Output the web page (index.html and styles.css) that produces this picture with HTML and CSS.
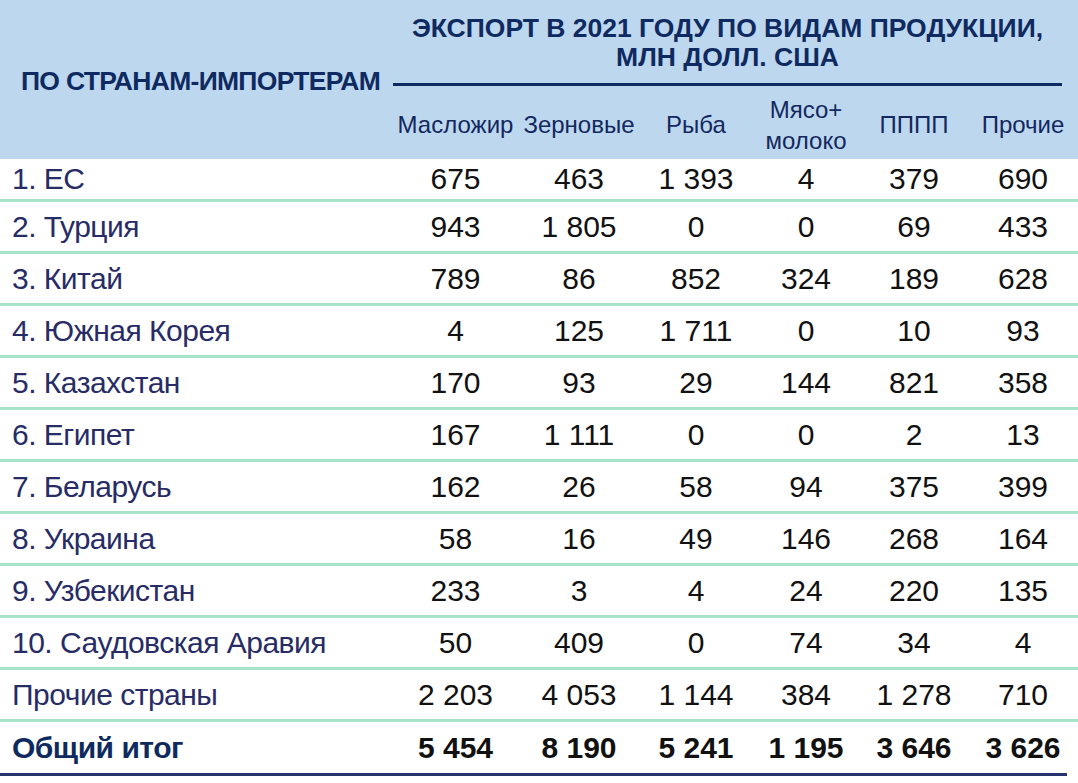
FILE: index.html
```html
<!DOCTYPE html>
<html lang="ru">
<head>
<meta charset="utf-8">
<title>Экспорт 2021</title>
<link rel="stylesheet" href="styles.css">
</head>
<body>
<div class="sheet">
  <div class="header">
    <div class="by-country">ПО СТРАНАМ-ИМПОРТЕРАМ</div>
    <div class="right">
      <div class="title">ЭКСПОРТ В 2021 ГОДУ ПО ВИДАМ ПРОДУКЦИИ,<br>МЛН ДОЛЛ. США</div>
      <div class="subheads">
        <div class="sh">Масложир</div>
        <div class="sh">Зерновые</div>
        <div class="sh">Рыба</div>
        <div class="sh two">Мясо+<br>молоко</div>
        <div class="sh">ПППП</div>
        <div class="sh">Прочие</div>
      </div>
    </div>
  </div>
  <div class="body">
    <div class="row first"><div class="c">1. ЕС</div><div class="n">675</div><div class="n">463</div><div class="n">1 393</div><div class="n">4</div><div class="n">379</div><div class="n">690</div></div>
    <div class="row"><div class="c">2. Турция</div><div class="n">943</div><div class="n">1 805</div><div class="n">0</div><div class="n">0</div><div class="n">69</div><div class="n">433</div></div>
    <div class="row"><div class="c">3. Китай</div><div class="n">789</div><div class="n">86</div><div class="n">852</div><div class="n">324</div><div class="n">189</div><div class="n">628</div></div>
    <div class="row"><div class="c">4. Южная Корея</div><div class="n">4</div><div class="n">125</div><div class="n">1 711</div><div class="n">0</div><div class="n">10</div><div class="n">93</div></div>
    <div class="row"><div class="c">5. Казахстан</div><div class="n">170</div><div class="n">93</div><div class="n">29</div><div class="n">144</div><div class="n">821</div><div class="n">358</div></div>
    <div class="row"><div class="c">6. Египет</div><div class="n">167</div><div class="n">1 111</div><div class="n">0</div><div class="n">0</div><div class="n">2</div><div class="n">13</div></div>
    <div class="row"><div class="c">7. Беларусь</div><div class="n">162</div><div class="n">26</div><div class="n">58</div><div class="n">94</div><div class="n">375</div><div class="n">399</div></div>
    <div class="row"><div class="c">8. Украина</div><div class="n">58</div><div class="n">16</div><div class="n">49</div><div class="n">146</div><div class="n">268</div><div class="n">164</div></div>
    <div class="row"><div class="c">9. Узбекистан</div><div class="n">233</div><div class="n">3</div><div class="n">4</div><div class="n">24</div><div class="n">220</div><div class="n">135</div></div>
    <div class="row"><div class="c">10. Саудовская Аравия</div><div class="n">50</div><div class="n">409</div><div class="n">0</div><div class="n">74</div><div class="n">34</div><div class="n">4</div></div>
    <div class="row"><div class="c">Прочие страны</div><div class="n">2 203</div><div class="n">4 053</div><div class="n">1 144</div><div class="n">384</div><div class="n">1 278</div><div class="n">710</div></div>
    <div class="row total"><div class="c">Общий итог</div><div class="n">5 454</div><div class="n">8 190</div><div class="n">5 241</div><div class="n">1 195</div><div class="n">3 646</div><div class="n">3 626</div></div>
  </div>
</div>
</body>
</html>
```

FILE: styles.css
```css
html, body {
  margin: 0;
  padding: 0;
  background: #ffffff;
}
body {
  font-family: "Liberation Sans Narrow", "Liberation Sans", Arial, sans-serif;
  width: 1078px;
  height: 783px;
  overflow: hidden;
}
.sheet {
  width: 1078px;
}
.header {
  display: grid;
  grid-template-columns: 393px 685px;
  height: 159px;
  background: #bdd7ee;
  color: #0e2a60;
}
.by-country {
  display: flex;
  align-items: center;
  padding: 4px 0 0 21px;
  font-weight: bold;
  font-size: 26.5px;
  letter-spacing: -0.7px;
  white-space: nowrap;
}
.right {
  display: flex;
  flex-direction: column;
}
.title {
  font-weight: bold;
  font-size: 26.5px;
  line-height: 29px;
  text-align: center;
  padding: 14px 0 11px 0;
  margin-right: 16px;
  border-bottom: 3px solid #0e2a60;
}
.subheads {
  flex: 1;
  display: grid;
  grid-template-columns: 125px 122px 112px 108px 108px 110px;
  align-items: center;
  padding-top: 4px;
}
.sh {
  text-align: center;
  font-size: 24px;
  line-height: 31px;
  color: #13285e;
  white-space: nowrap;
}
.body {
  display: flex;
  flex-direction: column;
}
.row {
  display: grid;
  grid-template-columns: 393px 125px 122px 112px 108px 108px 110px;
  align-items: center;
  height: 49px;
  border-bottom: 3px solid #a6e3c9;
  font-size: 30px;
}
.row.first {
  height: 40px;
}
.c {
  padding-left: 12px;
  color: #272c66;
  white-space: nowrap;
  letter-spacing: -0.5px;
}
.n {
  text-align: center;
  color: #111111;
  white-space: nowrap;
}
.row.total {
  font-weight: bold;
  height: 51px;
  border-bottom: none;
  padding-bottom: 3px;
  background: linear-gradient(#27336e, #27336e) no-repeat left bottom / 1067px 3px;
}
.row.total .c {
  color: #0e2a60;
}
```
